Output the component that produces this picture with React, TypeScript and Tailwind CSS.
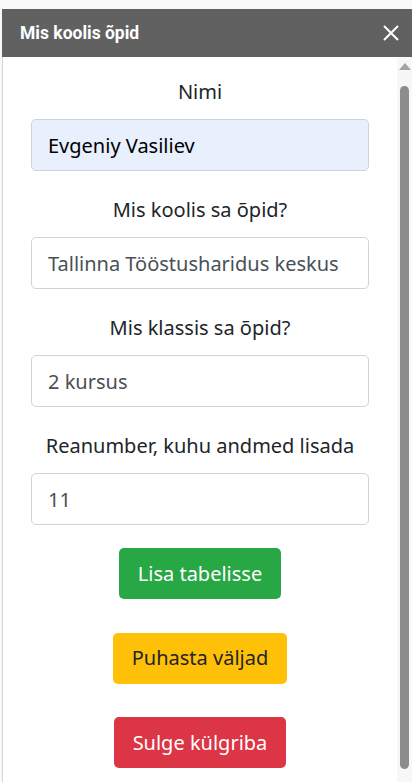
import { useState } from "react";

const fields = [
  { label: "Nimi", value: "Evgeniy Vasiliev", filled: true },
  { label: "Mis koolis sa õpid?", value: "Tallinna Tööstusharidus keskus", filled: false },
  { label: "Mis klassis sa õpid?", value: "2 kursus", filled: false },
  { label: "Reanumber, kuhu andmed lisada", value: "11", filled: false },
];

export default function App() {
  const [values, setValues] = useState(fields.map(f => f.value));

  return (
    <div className="w-[412px] h-[782px] bg-[#f8f9fa] pt-[9px] pl-[2px] flex flex-col overflow-hidden font-['Noto_Sans',sans-serif]">
      <div className="h-[48px] shrink-0 bg-[#616161] flex items-center justify-between pl-[18px] pr-[13px]">
        <span className="text-white font-bold text-[17.5px] font-['Roboto',sans-serif]">Mis koolis õpid</span>
        <svg className="w-[16px] h-[16px]" viewBox="0 0 16 16" fill="none" stroke="white" strokeWidth="2">
          <path d="M1 1l14 14M15 1L1 15" />
        </svg>
      </div>

      <div className="flex-1 flex bg-white border-l border-[#d6d6d6] min-h-0">
        <div className="flex-1 px-[28px] pt-[20px] flex flex-col">
          {fields.map((f, i) => (
            <div key={f.label} className="flex flex-col mb-[24px]">
              <label className="text-center text-[20px] leading-[30px] text-[#212529] mb-[12px]">{f.label}</label>
              <input
                className={`h-[52px] w-full rounded-[5px] border border-[#ced4da] px-[16px] text-[20px] outline-none ${f.filled ? "bg-[#e8f0fe] text-black" : "bg-white text-[#495057]"}`}
                value={values[i]}
                onChange={e => setValues(values.map((v, j) => (j === i ? e.target.value : v)))}
              />
            </div>
          ))}

          <div className="flex flex-col items-center gap-[33.5px] -mt-[1px]">
            <button className="h-[51px] px-[19px] rounded-[5px] bg-[#28a745] text-white text-[20px]">Lisa tabelisse</button>
            <button className="h-[51px] px-[19px] rounded-[5px] bg-[#ffc107] text-[#212529] text-[20px]">Puhasta väljad</button>
            <button className="h-[51px] px-[19px] rounded-[5px] bg-[#dc3545] text-white text-[20px]">Sulge külgriba</button>
          </div>
        </div>

        <div className="w-[15px] shrink-0 bg-[#f7f7f7] flex flex-col items-center">
          <svg className="mt-[6px] w-[12px] h-[7px]" viewBox="0 0 12 7">
            <path d="M6 0L12 7H0z" fill="#a3a3a3" />
          </svg>
          <div className="mt-[16px] w-[9px] h-[683px] rounded-full bg-[#8c8c8c]" />
        </div>
      </div>
    </div>
  );
}
